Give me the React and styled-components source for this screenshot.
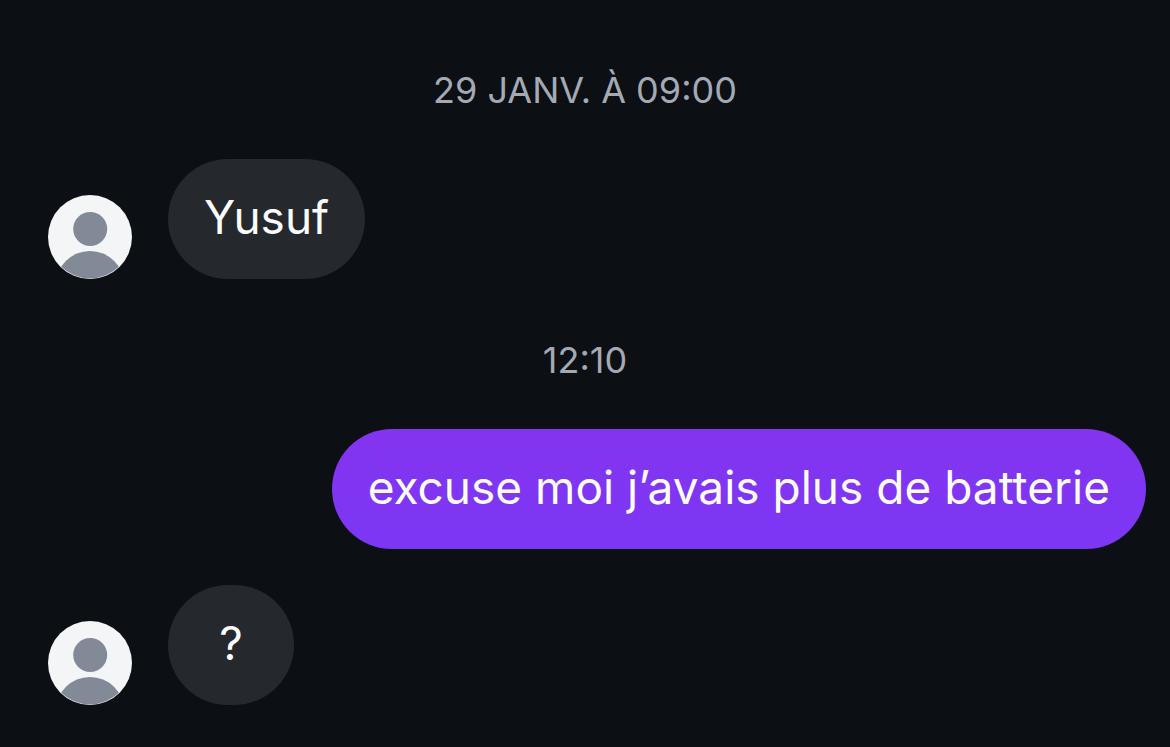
import React from "react";
import styled, { createGlobalStyle } from "styled-components";

const GlobalStyle = createGlobalStyle`
  * {
    box-sizing: border-box;
  }
  body {
    margin: 0;
    background: #0c0f14;
    font-family: Inter, "Liberation Sans", sans-serif;
  }
`;

const Thread = styled.main`
  display: flex;
  flex-direction: column;
  min-height: 100vh;
  padding: 66px 24px 42px 48px;
`;

const Timestamp = styled.time`
  display: block;
  margin: ${({ $first }) => ($first ? "0 0 45px" : "57px 0 45px")};
  padding-right: 24px;
  color: #a3aab4;
  font-size: 36px;
  line-height: 48px;
  text-align: center;
  text-transform: uppercase;
`;

const MessageRow = styled.article`
  display: flex;
  align-items: flex-end;
  justify-content: ${({ $mine }) => ($mine ? "flex-end" : "flex-start")};
  gap: 36px;

  & + & {
    margin-top: 36px;
  }
`;

const Avatar = styled.svg`
  flex: none;
  width: 84px;
  height: 84px;
`;

const Bubble = styled.p`
  min-width: 126px;
  margin: 0;
  padding: 28px 36px 32px;
  border-radius: 60px;
  background: ${({ $mine }) =>
    $mine ? "linear-gradient(#8334ef, #7c37f5)" : "#25282d"};
  color: #fcfcfd;
  font-size: 46px;
  line-height: 60px;
  text-align: center;
`;

const messages = [
  { id: 1, date: "29 janv. à 09:00", text: "Yusuf" },
  { id: 2, date: "12:10", text: "excuse moi j’avais plus de batterie", mine: true },
  { id: 3, text: "?" },
];

function UserAvatar() {
  return (
    <Avatar viewBox="0 0 84 84" role="img" aria-label="Avatar">
      <defs>
        <clipPath id="avatar-circle">
          <circle cx="42" cy="42" r="41.5" />
        </clipPath>
      </defs>
      <circle cx="42" cy="42" r="42" fill="#f4f5f7" />
      <g clipPath="url(#avatar-circle)" fill="#838a97">
        <circle cx="42.2" cy="34" r="17" />
        <circle cx="42" cy="90.3" r="34.3" />
      </g>
    </Avatar>
  );
}

function App() {
  return (
    <>
      <GlobalStyle />
      <Thread>
        {messages.map(({ id, date, text, mine }, index) => (
          <React.Fragment key={id}>
            {date && <Timestamp $first={index === 0}>{date}</Timestamp>}
            <MessageRow $mine={mine}>
              {!mine && <UserAvatar />}
              <Bubble $mine={mine}>{text}</Bubble>
            </MessageRow>
          </React.Fragment>
        ))}
      </Thread>
    </>
  );
}

export default App;
